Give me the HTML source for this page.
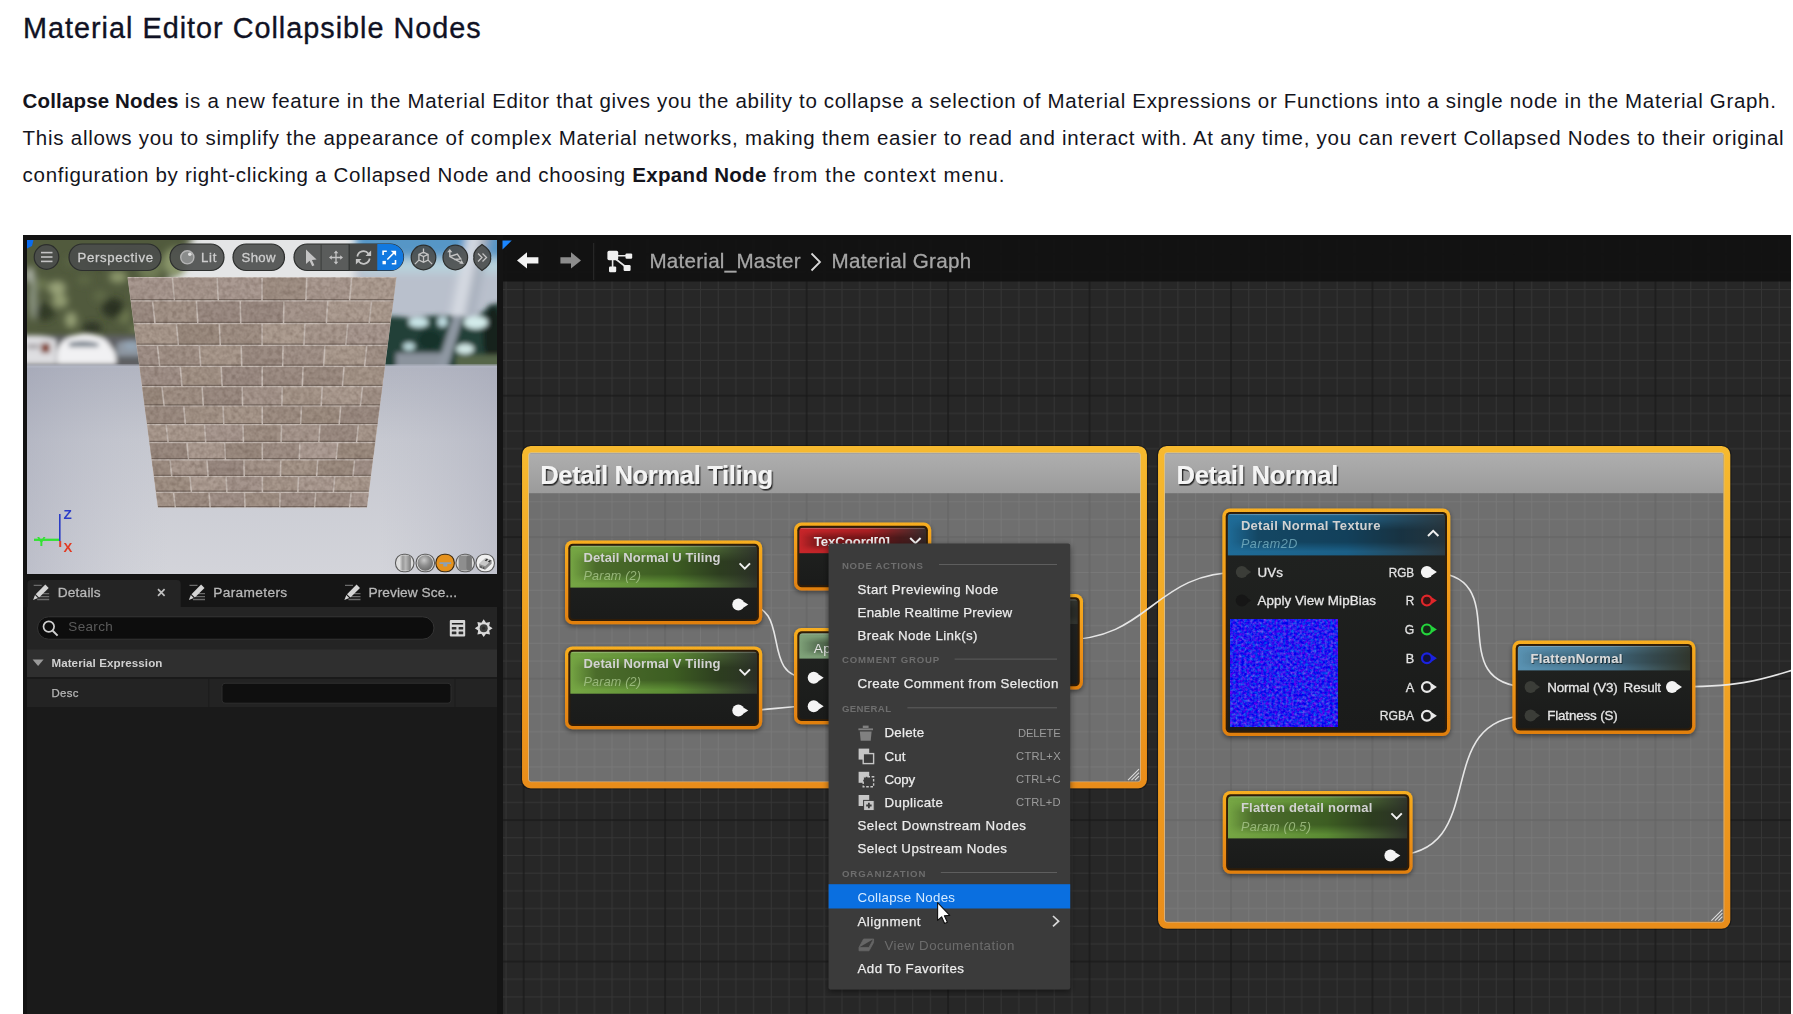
<!DOCTYPE html>
<html lang="en"><head><meta charset="utf-8"><title>Material Editor Collapsible Nodes</title>
<style>
html,body{margin:0;padding:0;background:#fff;}
body{width:1793px;height:1014px;overflow:hidden;position:relative;font-family:"Liberation Sans",sans-serif;}
.ttl{position:absolute;left:23px;top:10.8px;margin:0;font-weight:400;font-size:28.8px;line-height:34px;letter-spacing:1px;color:#101224;-webkit-text-stroke:.35px #101224;white-space:nowrap;}
.para{position:absolute;left:22.6px;top:82.2px;margin:0;font-size:20.5px;line-height:37.1px;color:#14141c;white-space:nowrap;}
.para b{font-weight:700;}
#shot{position:absolute;left:23px;top:235px;width:1768px;height:779px;display:block;}
#shotwrap{position:absolute;left:23px;top:235px;width:1768px;height:779px;overflow:hidden;background:#131313;}
#shotwrap #shot{left:0;top:0;filter:blur(.45px);}
</style></head>
<body>

<h1 class="ttl">Material Editor Collapsible Nodes</h1>
<p class="para"><span style="letter-spacing:.15px"><b>Collapse Nodes</b></span><span style="letter-spacing:.68px"> is a new feature in the Material Editor that gives you the ability to collapse a selection of Material Expressions or Functions into a single node in the Material Graph.</span><br><span style="letter-spacing:.748px">This allows you to simplify the appearance of complex Material networks, making them easier to read and interact with. At any time, you can revert Collapsed Nodes to their original</span><br><span style="letter-spacing:.70px">configuration by right-clicking a Collapsed Node and choosing </span><span style="letter-spacing:.3px"><b>Expand Node</b></span><span style="letter-spacing:1.02px"> from the context menu.</span></p>
<div id="shotwrap"><svg id="shot" viewBox="23 235 1768 779" width="1768" height="779" font-family="'Liberation Sans', sans-serif">
<defs>

<clipPath id="vpclip"><rect x="27" y="240" width="470" height="334"/></clipPath>
<filter id="blur6" x="-20%" y="-20%" width="140%" height="140%"><feGaussianBlur stdDeviation="4"/></filter>
<filter id="blur3" x="-20%" y="-20%" width="140%" height="140%"><feGaussianBlur stdDeviation="2.5"/></filter>
<filter id="blur4" x="-20%" y="-20%" width="140%" height="140%"><feGaussianBlur stdDeviation="3.6"/></filter>
<filter id="blur1" x="-20%" y="-20%" width="140%" height="140%"><feGaussianBlur stdDeviation="1.2"/></filter>
<linearGradient id="floorg" x1="0" y1="0" x2="0" y2="1"><stop offset="0" stop-color="#b2b5c1"/><stop offset=".35" stop-color="#c6c8d0"/><stop offset="1" stop-color="#d3d4da"/></linearGradient>
<linearGradient id="floorh" x1="0" y1="0" x2="1" y2="0"><stop offset="0" stop-color="#8f93a8" stop-opacity=".32"/><stop offset=".3" stop-color="#b0b3c2" stop-opacity="0"/><stop offset=".75" stop-color="#b0b3c2" stop-opacity="0"/><stop offset="1" stop-color="#9da0b2" stop-opacity=".35"/></linearGradient>
<linearGradient id="skyr" x1="0" y1="0" x2="0" y2="1"><stop offset="0" stop-color="#4f93c6"/><stop offset="1" stop-color="#a9c6d8"/></linearGradient>
<filter id="bricknoise" x="0" y="0" width="100%" height="100%" color-interpolation-filters="sRGB"><feTurbulence type="fractalNoise" baseFrequency="0.22" numOctaves="2" seed="7" result="n"/><feColorMatrix in="n" type="matrix" values="0 0 0 0 0.25  0 0 0 0 0.18  0 0 0 0 0.14  0.34 0.34 0 0 -0.27" result="a"/><feComposite in="a" in2="SourceAlpha" operator="in" result="dark"/><feMerge><feMergeNode in="SourceGraphic"/><feMergeNode in="dark"/></feMerge></filter>
<pattern id="grid" x="523.7" y="395.7" width="141.464" height="141.464" patternUnits="userSpaceOnUse">
<rect width="141.464" height="141.464" fill="#272727"/>
<rect x="17.18" y="0" width="1" height="141.46" fill="#353535"/>
<rect x="0" y="17.18" width="141.46" height="1" fill="#353535"/>
<rect x="34.87" y="0" width="1" height="141.46" fill="#353535"/>
<rect x="0" y="34.87" width="141.46" height="1" fill="#353535"/>
<rect x="52.55" y="0" width="1" height="141.46" fill="#353535"/>
<rect x="0" y="52.55" width="141.46" height="1" fill="#353535"/>
<rect x="70.23" y="0" width="1" height="141.46" fill="#353535"/>
<rect x="0" y="70.23" width="141.46" height="1" fill="#353535"/>
<rect x="87.91" y="0" width="1" height="141.46" fill="#353535"/>
<rect x="0" y="87.91" width="141.46" height="1" fill="#353535"/>
<rect x="105.60" y="0" width="1" height="141.46" fill="#353535"/>
<rect x="0" y="105.60" width="141.46" height="1" fill="#353535"/>
<rect x="123.28" y="0" width="1" height="141.46" fill="#353535"/>
<rect x="0" y="123.28" width="141.46" height="1" fill="#353535"/>
<rect x="-0.6" y="0" width="1.2" height="141.46" fill="#171717"/><rect x="140.86" y="0" width="1.2" height="141.46" fill="#171717"/>
<rect x="0" y="-0.6" width="141.46" height="1.2" fill="#171717"/><rect x="0" y="140.86" width="141.46" height="1.2" fill="#171717"/>
</pattern>
<linearGradient id="cborder" x1="0" y1="0" x2="0" y2="1"><stop offset="0" stop-color="#f6b92f"/><stop offset=".5" stop-color="#f0a222"/><stop offset="1" stop-color="#e98d1a"/></linearGradient>
<linearGradient id="ctitle" x1="0" y1="0" x2="0" y2="1"><stop offset="0" stop-color="#aeaeae"/><stop offset="1" stop-color="#9b9b9b"/></linearGradient>
<filter id="tshadow" x="-5%" y="-20%" width="110%" height="150%"><feDropShadow dx="1.3" dy="1.6" stdDeviation="0.5" flood-color="#000" flood-opacity=".75"/></filter>
<filter id="tshadow2" x="-5%" y="-20%" width="110%" height="150%"><feDropShadow dx=".8" dy="1" stdDeviation="0.4" flood-color="#000" flood-opacity=".6"/></filter>
<filter id="nshadow" x="-10%" y="-10%" width="120%" height="130%"><feDropShadow dx="0" dy="2" stdDeviation="2.5" flood-color="#000" flood-opacity=".45"/></filter>
<linearGradient id="nborder" x1="0" y1="0" x2="0" y2="1"><stop offset="0" stop-color="#f7ae20"/><stop offset=".5" stop-color="#ee9418"/><stop offset="1" stop-color="#e07f10"/></linearGradient>
<linearGradient id="hgreen" x1="0" y1="0" x2="1" y2="0"><stop offset="0" stop-color="#76a644"/><stop offset=".55" stop-color="#5a8a33"/><stop offset="1" stop-color="#30352c"/></linearGradient>
<linearGradient id="hblue" x1="0" y1="0" x2="1" y2="0"><stop offset="0" stop-color="#1f6c98"/><stop offset=".55" stop-color="#1b5f86"/><stop offset="1" stop-color="#2b3b44"/></linearGradient>
<linearGradient id="hred" x1="0" y1="0" x2="1" y2="0"><stop offset="0" stop-color="#c8262a"/><stop offset=".55" stop-color="#aa1f23"/><stop offset="1" stop-color="#3a2c2c"/></linearGradient>
<linearGradient id="hfunc" x1="0" y1="0" x2="1" y2="0"><stop offset="0" stop-color="#5a93b3"/><stop offset=".55" stop-color="#48748c"/><stop offset="1" stop-color="#34392f"/></linearGradient>
<linearGradient id="hgg" x1="0" y1="0" x2="1" y2="0"><stop offset="0" stop-color="#7fa279"/><stop offset=".55" stop-color="#6d8c6a"/><stop offset="1" stop-color="#3a3f3a"/></linearGradient>
<linearGradient id="hdk" x1="0" y1="0" x2="1" y2="0"><stop offset="0" stop-color="#5a6a58"/><stop offset=".55" stop-color="#4a5648"/><stop offset="1" stop-color="#30322e"/></linearGradient>
<linearGradient id="gloss" x1="0" y1="0" x2="0" y2="1"><stop offset="0" stop-color="#fff" stop-opacity=".10"/><stop offset=".12" stop-color="#000" stop-opacity="0"/><stop offset=".38" stop-color="#000" stop-opacity=".32"/><stop offset=".68" stop-color="#000" stop-opacity=".32"/><stop offset=".9" stop-color="#000" stop-opacity="0"/></linearGradient>
<linearGradient id="glossm" x1="0" y1="0" x2="1" y2="0"><stop offset="0" stop-color="#fff" stop-opacity="0"/><stop offset=".14" stop-color="#fff" stop-opacity="1"/><stop offset=".8" stop-color="#fff" stop-opacity="1"/><stop offset="1" stop-color="#fff" stop-opacity=".4"/></linearGradient>
<mask id="glossmask" maskContentUnits="objectBoundingBox"><rect width="1" height="1" fill="url(#glossm)"/></mask>
<linearGradient id="bodyg" x1="0" y1="0" x2="0" y2="1"><stop offset="0" stop-color="#212321"/><stop offset="1" stop-color="#1a1b1a"/></linearGradient>
</defs>
<rect x="23" y="235" width="1768" height="779" fill="#131313"/>
<rect x="503" y="239" width="1288" height="775" fill="url(#grid)" />
<rect x="503" y="235" width="1288" height="46.5" fill="#111111" opacity=".93"/>
<rect x="497" y="235" width="6" height="779" fill="#141414" />
<polygon points="502.5,240.5 511.8,240.5 502.5,249.5" fill="#1b86ff"/>
<path d="M517 260.4l10 -8.2v5h11.4v6.4h-11.4v5z" fill="#f2f2f2"/>
<path d="M581 260.4l-10 -8.2v5h-10.6v6.4h10.6v5z" fill="#8c8c8c"/>
<rect x="593.2" y="243" width="1" height="37" fill="#2c2c2c" />
<g stroke="#e6e6e6" stroke-width="1.6" fill="none"><path d="M612.6 258V268M616 255.8H627M615 258.5L626 267"/></g>
<rect x="607.4" y="250.8" width="10.8" height="9.4" rx="1.6" fill="#f0f0f0" />
<rect x="625.5" y="253.4" width="6.7" height="5.4" rx="1.2" fill="#f0f0f0" />
<rect x="609" y="266.4" width="7.2" height="5.8" rx="1.2" fill="#f0f0f0" />
<rect x="623.6" y="265" width="7" height="6" rx="1.2" fill="#f0f0f0" />
<text x="649.4" y="268" font-size="20.6" fill="#a6a6a6" textLength="151.2" lengthAdjust="spacing" stroke="#a6a6a6" stroke-width="0.3">Material_Master</text>
<path d="M811.5 253.5L820 262L811.5 270.5" stroke="#d8d8d8" stroke-width="1.8" fill="none"/>
<text x="831.6" y="267.6" font-size="20.6" fill="#a6a6a6" textLength="139.5" lengthAdjust="spacing" stroke="#a6a6a6" stroke-width="0.3">Material Graph</text>
<rect x="529" y="453.2" width="611" height="328" fill="#ffffff" opacity=".335"/>
<rect x="529" y="453.2" width="611" height="40" fill="url(#ctitle)" />
<rect x="525.5" y="449.5" width="618" height="335.4" rx="5.2" fill="none" stroke="url(#cborder)" stroke-width="7.0"/>
<rect x="521.5" y="445.5" width="626" height="343.4" rx="9" fill="none" stroke="#000" stroke-width="1.2" opacity=".335"/>
<rect x="528.5" y="452.7" width="612" height="329" rx="2.5" fill="none" stroke="#c9c9c9" stroke-width="1" opacity=".55"/>
<text x="540.2" y="483.8" font-size="25.6" fill="#f4f4f4" font-weight="700" textLength="233" lengthAdjust="spacing" filter="url(#tshadow)">Detail Normal Tiling</text>
<g stroke="#e8e8e8" stroke-width="1.1" opacity=".9"><path d="M1128.0 780.1999999999999L1139.0 769.1999999999999M1131.5 780.1999999999999L1139.0 772.6999999999999M1135.0 780.1999999999999L1139.0 776.1999999999999"/></g>
<rect x="1165" y="453.2" width="558.4" height="468.4" fill="#ffffff" opacity=".335"/>
<rect x="1165" y="453.2" width="558.4" height="40" fill="url(#ctitle)" />
<rect x="1161.5" y="449.5" width="565.4" height="475.8" rx="5.2" fill="none" stroke="url(#cborder)" stroke-width="7.0"/>
<rect x="1157.5" y="445.5" width="573.4" height="483.8" rx="9" fill="none" stroke="#000" stroke-width="1.2" opacity=".335"/>
<rect x="1164.5" y="452.7" width="559.4" height="469.4" rx="2.5" fill="none" stroke="#c9c9c9" stroke-width="1" opacity=".55"/>
<text x="1176.4" y="483.8" font-size="25.6" fill="#f4f4f4" font-weight="700" textLength="162" lengthAdjust="spacing" filter="url(#tshadow)">Detail Normal</text>
<g stroke="#e8e8e8" stroke-width="1.1" opacity=".9"><path d="M1711.4 920.5999999999999L1722.4 909.5999999999999M1714.9 920.5999999999999L1722.4 913.0999999999999M1718.4 920.5999999999999L1722.4 916.5999999999999"/></g>
<path d="M744 604.6C794 604.6 758 677.8 808 677.8" stroke="#e6e6e6" stroke-width="1.6" fill="none" stroke-linecap="round"/>
<path d="M744 710.6C768 710.6 784 706.2 808 706.2" stroke="#e6e6e6" stroke-width="1.6" fill="none" stroke-linecap="round"/>
<path d="M1062 640C1152 640 1151.8 572 1241.8 572" stroke="#e6e6e6" stroke-width="1.6" fill="none" stroke-linecap="round"/>
<path d="M1426.9 572C1521.9 572 1435.6 687 1530.6 687" stroke="#e6e6e6" stroke-width="1.6" fill="none" stroke-linecap="round"/>
<path d="M1390.4 855.6C1495.4 855.6 1425.6 715.4 1530.6 715.4" stroke="#e6e6e6" stroke-width="1.6" fill="none" stroke-linecap="round"/>
<path d="M1672 687C1740 687 1760 680 1793 670" stroke="#e6e6e6" stroke-width="1.6" fill="none" stroke-linecap="round"/>
<rect x="794" y="522.5" width="137.2" height="68" rx="7.5" fill="url(#nborder)" filter="url(#nshadow)"/>
<rect x="797.3" y="525.8" width="130.6" height="61.4" rx="4.5" fill="#2f1c08"/>
<clipPath id="nc1"><rect x="799.2" y="527.7" width="126.8" height="57.6" rx="3.6"/></clipPath>
<g clip-path="url(#nc1)">
<rect x="799.2" y="527.7" width="126.8" height="57.6" fill="url(#bodyg)" />
<rect x="799.2" y="527.7" width="126.8" height="25.5" fill="url(#hred)" />
<rect x="799.2" y="527.7" width="126.8" height="25.5" fill="url(#gloss)" mask="url(#glossmask)"/>
<rect x="799.2" y="527.7" width="126.8" height="1.2" fill="#ffffff" opacity=".22"/>
</g>
<text x="813.8" y="546.3" font-size="13.2" fill="#ececec" font-weight="700" textLength="76" lengthAdjust="spacing">TexCoord[0]</text>
<path d="M910.1999999999999 538.0L915.4 543.2L920.6 538.0" stroke="#f0f0f0" stroke-width="2" fill="none" stroke-linejoin="miter"/>
<rect x="794" y="628" width="166" height="96.3" rx="7.5" fill="url(#nborder)" filter="url(#nshadow)"/>
<rect x="797.3" y="631.3" width="159.4" height="89.7" rx="4.5" fill="#2f1c08"/>
<clipPath id="nc2"><rect x="799.2" y="633.2" width="155.6" height="85.9" rx="3.6"/></clipPath>
<g clip-path="url(#nc2)">
<rect x="799.2" y="633.2" width="155.6" height="85.9" fill="url(#bodyg)" />
<rect x="799.2" y="633.2" width="155.6" height="25.4" fill="url(#hgg)" />
<rect x="799.2" y="633.2" width="155.6" height="25.4" fill="url(#gloss)" mask="url(#glossmask)"/>
<rect x="799.2" y="633.2" width="155.6" height="1.2" fill="#ffffff" opacity=".22"/>
</g>
<text x="813.7" y="653" font-size="13.6" fill="#e4e4e4" textLength="17" lengthAdjust="spacing">Ap</text>
<path d="M818.7 674.5999999999999L823.7 677.8L818.7 681.0Z" fill="#f4f4f4"/>
<circle cx="813.7" cy="677.8" r="6" fill="#f4f4f4"/>
<path d="M818.7 703.0L823.7 706.2L818.7 709.4000000000001Z" fill="#f4f4f4"/>
<circle cx="813.7" cy="706.2" r="6" fill="#f4f4f4"/>
<rect x="960" y="594" width="123" height="95.6" rx="7.5" fill="url(#nborder)" filter="url(#nshadow)"/>
<rect x="963.3" y="597.3" width="116.4" height="89" rx="4.5" fill="#2f1c08"/>
<clipPath id="nc3"><rect x="965.2" y="599.2" width="112.6" height="85.2" rx="3.6"/></clipPath>
<g clip-path="url(#nc3)">
<rect x="965.2" y="599.2" width="112.6" height="85.2" fill="url(#bodyg)" />
<rect x="965.2" y="599.2" width="112.6" height="24.8" fill="url(#hdk)" />
<rect x="965.2" y="599.2" width="112.6" height="24.8" fill="url(#gloss)" mask="url(#glossmask)"/>
<rect x="965.2" y="599.2" width="112.6" height="1.2" fill="#ffffff" opacity=".22"/>
</g>
<rect x="565" y="540.4" width="197.2" height="83.9" rx="7.5" fill="url(#nborder)" filter="url(#nshadow)"/>
<rect x="568.3" y="543.7" width="190.6" height="77.3" rx="4.5" fill="#2f1c08"/>
<clipPath id="nc4"><rect x="570.2" y="545.6" width="186.8" height="73.5" rx="3.6"/></clipPath>
<g clip-path="url(#nc4)">
<rect x="570.2" y="545.6" width="186.8" height="73.5" fill="url(#bodyg)" />
<rect x="570.2" y="545.6" width="186.8" height="42" fill="url(#hgreen)" />
<rect x="570.2" y="545.6" width="186.8" height="42" fill="url(#gloss)" mask="url(#glossmask)"/>
<rect x="570.2" y="545.6" width="186.8" height="1.2" fill="#ffffff" opacity=".22"/>
</g>
<text x="583.5" y="562" font-size="13" fill="#d2d2d2" font-weight="700" textLength="137" lengthAdjust="spacing">Detail Normal U Tiling</text>
<text x="583.5" y="580.3" font-size="12.6" fill="#a9c78c" font-style="italic" textLength="57.5" lengthAdjust="spacing" opacity="0.8">Param (2)</text>
<path d="M739.5999999999999 563.4L744.8 568.6L750.0 563.4" stroke="#f0f0f0" stroke-width="2" fill="none" stroke-linejoin="miter"/>
<path d="M743.3 601.4L748.3 604.6L743.3 607.8000000000001Z" fill="#f4f4f4"/>
<circle cx="738.3" cy="604.6" r="6" fill="#f4f4f4"/>
<rect x="565" y="646.4" width="197.2" height="82.9" rx="7.5" fill="url(#nborder)" filter="url(#nshadow)"/>
<rect x="568.3" y="649.7" width="190.6" height="76.3" rx="4.5" fill="#2f1c08"/>
<clipPath id="nc5"><rect x="570.2" y="651.6" width="186.8" height="72.5" rx="3.6"/></clipPath>
<g clip-path="url(#nc5)">
<rect x="570.2" y="651.6" width="186.8" height="72.5" fill="url(#bodyg)" />
<rect x="570.2" y="651.6" width="186.8" height="42.1" fill="url(#hgreen)" />
<rect x="570.2" y="651.6" width="186.8" height="42.1" fill="url(#gloss)" mask="url(#glossmask)"/>
<rect x="570.2" y="651.6" width="186.8" height="1.2" fill="#ffffff" opacity=".22"/>
</g>
<text x="583.5" y="667.8" font-size="13" fill="#d2d2d2" font-weight="700" textLength="137" lengthAdjust="spacing">Detail Normal V Tiling</text>
<text x="583.5" y="685.6" font-size="12.6" fill="#a9c78c" font-style="italic" textLength="57.5" lengthAdjust="spacing" opacity="0.8">Param (2)</text>
<path d="M739.5999999999999 669.4L744.8 674.6L750.0 669.4" stroke="#f0f0f0" stroke-width="2" fill="none" stroke-linejoin="miter"/>
<path d="M743.3 707.4L748.3 710.6L743.3 713.8000000000001Z" fill="#f4f4f4"/>
<circle cx="738.3" cy="710.6" r="6" fill="#f4f4f4"/>
<rect x="1222.4" y="508.6" width="227.9" height="227.4" rx="7.5" fill="url(#nborder)" filter="url(#nshadow)"/>
<rect x="1225.7" y="511.9" width="221.3" height="220.8" rx="4.5" fill="#2f1c08"/>
<clipPath id="nc6"><rect x="1227.6" y="513.8" width="217.5" height="217" rx="3.6"/></clipPath>
<g clip-path="url(#nc6)">
<rect x="1227.6" y="513.8" width="217.5" height="217" fill="url(#bodyg)" />
<rect x="1227.6" y="513.8" width="217.5" height="41.6" fill="url(#hblue)" />
<rect x="1227.6" y="513.8" width="217.5" height="41.6" fill="url(#gloss)" mask="url(#glossmask)"/>
<rect x="1227.6" y="513.8" width="217.5" height="1.2" fill="#ffffff" opacity=".22"/>
</g>
<text x="1240.9" y="530.1" font-size="13" fill="#d2d2d2" font-weight="700" textLength="139.5" lengthAdjust="spacing">Detail Normal Texture</text>
<text x="1240.9" y="548.3" font-size="12.6" fill="#7fb8c8" font-style="italic" textLength="56.5" lengthAdjust="spacing" opacity="0.75">Param2D</text>
<path d="M1428.0 536.0L1433.2 530.8L1438.4 536.0" stroke="#f0f0f0" stroke-width="2" fill="none" stroke-linejoin="miter"/>
<path d="M1246.8 569L1251.2 572L1246.8 575Z" fill="#3b3d38"/>
<circle cx="1241.8" cy="572" r="6" fill="#3b3d38"/>
<text x="1257.4" y="576.6" font-size="13.4" fill="#e6e6e6" textLength="25.5" lengthAdjust="spacing" stroke="#e6e6e6" stroke-width="0.3">UVs</text>
<path d="M1246.8 597.6L1251.2 600.6L1246.8 603.6Z" fill="#161616"/>
<circle cx="1241.8" cy="600.6" r="6" fill="#161616"/>
<text x="1257.4" y="605.2" font-size="13.4" fill="#e6e6e6" textLength="118.5" lengthAdjust="spacing" stroke="#e6e6e6" stroke-width="0.3">Apply View MipBias</text>
<text x="1388.7" y="576.5" font-size="12.8" fill="#e2e2e2" textLength="25.5" lengthAdjust="spacingAndGlyphs" stroke="#e2e2e2" stroke-width="0.3">RGB</text>
<text x="1405.7" y="605.1" font-size="12.8" fill="#e2e2e2" textLength="8.5" lengthAdjust="spacingAndGlyphs" stroke="#e2e2e2" stroke-width="0.3">R</text>
<text x="1404.7" y="633.9" font-size="12.8" fill="#e2e2e2" textLength="9.5" lengthAdjust="spacingAndGlyphs" stroke="#e2e2e2" stroke-width="0.3">G</text>
<text x="1405.7" y="662.7" font-size="12.8" fill="#e2e2e2" textLength="8.5" lengthAdjust="spacingAndGlyphs" stroke="#e2e2e2" stroke-width="0.3">B</text>
<text x="1405.7" y="691.5" font-size="12.8" fill="#e2e2e2" textLength="8.5" lengthAdjust="spacingAndGlyphs" stroke="#e2e2e2" stroke-width="0.3">A</text>
<text x="1379.7" y="720.3" font-size="12.8" fill="#e2e2e2" textLength="34.5" lengthAdjust="spacingAndGlyphs" stroke="#e2e2e2" stroke-width="0.3">RGBA</text>
<path d="M1431.9 568.8L1436.9 572L1431.9 575.2Z" fill="#f4f4f4"/>
<circle cx="1426.9" cy="572" r="6" fill="#f4f4f4"/>
<path d="M1431.9 597.4L1436.9 600.6L1431.9 603.8000000000001Z" fill="#e0262a"/>
<circle cx="1426.9" cy="600.6" r="4.9" fill="#3a1414" stroke="#e0262a" stroke-width="2.2"/>
<path d="M1431.9 626.1999999999999L1436.9 629.4L1431.9 632.6Z" fill="#24d43c"/>
<circle cx="1426.9" cy="629.4" r="4.9" fill="#142a16" stroke="#24d43c" stroke-width="2.2"/>
<path d="M1431.9 655.0L1436.9 658.2L1431.9 661.4000000000001Z" fill="#1a22e0"/>
<circle cx="1426.9" cy="658.2" r="4.9" fill="#12123a" stroke="#1a22e0" stroke-width="2.2"/>
<path d="M1431.9 683.8L1436.9 687L1431.9 690.2Z" fill="#e8e8e8"/>
<circle cx="1426.9" cy="687" r="4.9" fill="#1c1c1c" stroke="#e8e8e8" stroke-width="2.2"/>
<path d="M1431.9 712.5999999999999L1436.9 715.8L1431.9 719.0Z" fill="#e8e8e8"/>
<circle cx="1426.9" cy="715.8" r="4.9" fill="#1c1c1c" stroke="#e8e8e8" stroke-width="2.2"/>
<filter id="nmap" x="0" y="0" width="100%" height="100%" color-interpolation-filters="sRGB"><feTurbulence type="fractalNoise" baseFrequency="0.36" numOctaves="2" seed="3" result="n"/><feColorMatrix in="n" type="matrix" values="0.9 0 0 0 -0.3  0 0.8 0 0 -0.28  0 0 0 0 0.93  0 0 0 0 1"/></filter>
<rect x="1230.4" y="619.2" width="107.6" height="107.6" fill="#2a2aee" filter="url(#nmap)"/>
<rect x="1512.4" y="640.6" width="183" height="93.3" rx="7.5" fill="url(#nborder)" filter="url(#nshadow)"/>
<rect x="1515.7" y="643.9" width="176.4" height="86.7" rx="4.5" fill="#2f1c08"/>
<clipPath id="nc7"><rect x="1517.6" y="645.8" width="172.6" height="82.9" rx="3.6"/></clipPath>
<g clip-path="url(#nc7)">
<rect x="1517.6" y="645.8" width="172.6" height="82.9" fill="url(#bodyg)" />
<rect x="1517.6" y="645.8" width="172.6" height="24.6" fill="url(#hfunc)" />
<rect x="1517.6" y="645.8" width="172.6" height="24.6" fill="url(#gloss)" mask="url(#glossmask)" opacity=".45"/>
<rect x="1517.6" y="645.8" width="172.6" height="1.2" fill="#ffffff" opacity=".22"/>
</g>
<text x="1530.4" y="663.2" font-size="13" fill="#dadada" font-weight="700" textLength="92" lengthAdjust="spacing" filter="url(#tshadow2)">FlattenNormal</text>
<path d="M1535.6 684L1540.0 687L1535.6 690Z" fill="#3b3d38"/>
<circle cx="1530.6" cy="687" r="6" fill="#3b3d38"/>
<path d="M1535.6 712.4L1540.0 715.4L1535.6 718.4Z" fill="#3b3d38"/>
<circle cx="1530.6" cy="715.4" r="6" fill="#3b3d38"/>
<text x="1547.2" y="691.6" font-size="13.4" fill="#e6e6e6" textLength="70.5" lengthAdjust="spacing" stroke="#e6e6e6" stroke-width="0.3">Normal (V3)</text>
<text x="1623.6" y="691.6" font-size="13.4" fill="#e6e6e6" textLength="37.5" lengthAdjust="spacing" stroke="#e6e6e6" stroke-width="0.3">Result</text>
<text x="1547.2" y="720" font-size="13.4" fill="#e6e6e6" textLength="70.5" lengthAdjust="spacing" stroke="#e6e6e6" stroke-width="0.3">Flatness (S)</text>
<path d="M1677 683.8L1682 687L1677 690.2Z" fill="#f4f4f4"/>
<circle cx="1672" cy="687" r="6" fill="#f4f4f4"/>
<rect x="1222.8" y="791" width="189.8" height="82.8" rx="7.5" fill="url(#nborder)" filter="url(#nshadow)"/>
<rect x="1226.1" y="794.3" width="183.2" height="76.2" rx="4.5" fill="#2f1c08"/>
<clipPath id="nc8"><rect x="1228" y="796.2" width="179.4" height="72.4" rx="3.6"/></clipPath>
<g clip-path="url(#nc8)">
<rect x="1228" y="796.2" width="179.4" height="72.4" fill="url(#bodyg)" />
<rect x="1228" y="796.2" width="179.4" height="42.2" fill="url(#hgreen)" />
<rect x="1228" y="796.2" width="179.4" height="42.2" fill="url(#gloss)" mask="url(#glossmask)"/>
<rect x="1228" y="796.2" width="179.4" height="1.2" fill="#ffffff" opacity=".22"/>
</g>
<text x="1240.9" y="811.8" font-size="13" fill="#d2d2d2" font-weight="700" textLength="131.5" lengthAdjust="spacing">Flatten detail normal</text>
<text x="1240.9" y="831" font-size="12.6" fill="#a9c78c" font-style="italic" textLength="70" lengthAdjust="spacing" opacity="0.8">Param (0.5)</text>
<path d="M1391.3999999999999 813.4L1396.6 818.6L1401.8 813.4" stroke="#f0f0f0" stroke-width="2" fill="none" stroke-linejoin="miter"/>
<path d="M1395.4 852.4L1400.4 855.6L1395.4 858.8000000000001Z" fill="#f4f4f4"/>
<circle cx="1390.4" cy="855.6" r="6" fill="#f4f4f4"/>
<filter id="mshadow" x="-10%" y="-5%" width="120%" height="112%"><feDropShadow dx="0" dy="2" stdDeviation="3" flood-color="#000" flood-opacity=".5"/></filter>
<rect x="828.6" y="543.6" width="241.6" height="446" rx="2" fill="#3a3a3a" filter="url(#mshadow)"/>
<text x="842" y="568.6" font-size="9.6" fill="#6e6e6e" font-weight="700" textLength="80.8" lengthAdjust="spacing">NODE ACTIONS</text>
<rect x="939" y="564" width="118" height="1" fill="#5e5e5e" />
<text x="857.5" y="593.5" font-size="13.3" fill="#ececec" textLength="140.6" lengthAdjust="spacing" stroke="#ececec" stroke-width="0.25">Start Previewing Node</text>
<text x="857.5" y="617.1" font-size="13.3" fill="#ececec" textLength="154.7" lengthAdjust="spacing" stroke="#ececec" stroke-width="0.25">Enable Realtime Preview</text>
<text x="857.5" y="640.1" font-size="13.3" fill="#ececec" textLength="120" lengthAdjust="spacing" stroke="#ececec" stroke-width="0.25">Break Node Link(s)</text>
<text x="842" y="663.2" font-size="9.6" fill="#6e6e6e" font-weight="700" textLength="97.2" lengthAdjust="spacing">COMMENT GROUP</text>
<rect x="954.6" y="658.6" width="102.4" height="1" fill="#5e5e5e" />
<text x="857.5" y="688.4" font-size="13.3" fill="#ececec" textLength="200.8" lengthAdjust="spacing" stroke="#ececec" stroke-width="0.25">Create Comment from Selection</text>
<text x="842" y="711.9" font-size="9.6" fill="#6e6e6e" font-weight="700" textLength="49" lengthAdjust="spacing">GENERAL</text>
<rect x="907.4" y="707.3" width="149.6" height="1" fill="#5e5e5e" />
<text x="884.4" y="737.4" font-size="13.3" fill="#ececec" textLength="39.8" lengthAdjust="spacing" stroke="#ececec" stroke-width="0.25">Delete</text>
<text x="884.4" y="760.5" font-size="13.3" fill="#ececec" textLength="21" lengthAdjust="spacing" stroke="#ececec" stroke-width="0.25">Cut</text>
<text x="884.4" y="783.7" font-size="13.3" fill="#ececec" textLength="30.7" lengthAdjust="spacing" stroke="#ececec" stroke-width="0.25">Copy</text>
<text x="884.4" y="806.9" font-size="13.3" fill="#ececec" textLength="58.6" lengthAdjust="spacing" stroke="#ececec" stroke-width="0.25">Duplicate</text>
<text x="857.5" y="829.7" font-size="13.3" fill="#ececec" textLength="168.5" lengthAdjust="spacing" stroke="#ececec" stroke-width="0.25">Select Downstream Nodes</text>
<text x="857.5" y="853.1" font-size="13.3" fill="#ececec" textLength="149.5" lengthAdjust="spacing" stroke="#ececec" stroke-width="0.25">Select Upstream Nodes</text>
<text x="1060.6" y="736.8" font-size="11.2" fill="#9c9c9c" text-anchor="end" textLength="42.5" lengthAdjust="spacing">DELETE</text>
<text x="1060.6" y="759.9" font-size="11.2" fill="#9c9c9c" text-anchor="end" textLength="44.5" lengthAdjust="spacing">CTRL+X</text>
<text x="1060.6" y="783.1" font-size="11.2" fill="#9c9c9c" text-anchor="end" textLength="44.5" lengthAdjust="spacing">CTRL+C</text>
<text x="1060.6" y="806.3" font-size="11.2" fill="#9c9c9c" text-anchor="end" textLength="44.5" lengthAdjust="spacing">CTRL+D</text>
<g fill="#808080"><rect x="858.4" y="728.4" width="14.6" height="1.8"/><rect x="862.8" y="725.6" width="5.8" height="2.4"/><path d="M859.8 731.4h11.8l-.9 9.4h-10z"/></g>
<rect x="858.6" y="748.6" width="10.6" height="11" fill="#c6c6c6"/><rect x="863.2" y="753.6" width="10.4" height="10" fill="#3a3a3a" stroke="#c6c6c6" stroke-width="1.4"/>
<rect x="858.6" y="771.8" width="10.6" height="11" fill="#c6c6c6"/><rect x="863.2" y="776.8" width="10.4" height="10" fill="#3a3a3a" stroke="#c6c6c6" stroke-width="1.4" stroke-dasharray="2.6 1.6"/>
<rect x="858.6" y="795" width="10.6" height="11" fill="#c6c6c6"/><rect x="863.6" y="800.4" width="10.6" height="10.2" fill="#c6c6c6" stroke="#3a3a3a" stroke-width="1"/><path d="M866.2 805.5h5.4M868.9 802.8v5.4" stroke="#3a3a3a" stroke-width="1.8"/>
<text x="842" y="876.6" font-size="9.6" fill="#6e6e6e" font-weight="700" textLength="83.4" lengthAdjust="spacing">ORGANIZATION</text>
<rect x="940.8" y="872" width="116.2" height="1" fill="#5e5e5e" />
<rect x="828.6" y="884.2" width="241.6" height="24.3" fill="#0a6fe0" />
<text x="857.5" y="901.6" font-size="13.3" fill="#d6ebff" textLength="97.5" lengthAdjust="spacing">Collapse Nodes</text>
<text x="857.5" y="926.3" font-size="13.3" fill="#ececec" textLength="63" lengthAdjust="spacing" stroke="#ececec" stroke-width="0.25">Alignment</text>
<path d="M1053 916L1058.6 921.2L1053 926.4" stroke="#d8d8d8" stroke-width="1.7" fill="none"/>
<path d="M859 947.4l4.6 -8.4h10l-4.6 8.4zM859 947.4v3.4h10l4.6 -8.4v-3.4" fill="#666" stroke="#666" stroke-width=".8"/>
<text x="884.4" y="949.5" font-size="13.3" fill="#6c6c6c" textLength="130" lengthAdjust="spacing">View Documentation</text>
<text x="857.5" y="972.5" font-size="13.3" fill="#ececec" textLength="106.5" lengthAdjust="spacing" stroke="#ececec" stroke-width="0.25">Add To Favorites</text>
<path d="M937.6 902.6V920.4L941.6 916.8L944.6 923.4L947.4 922.2L944.4 915.8L949.8 915.4Z" fill="#fff" stroke="#111" stroke-width="1.1" stroke-linejoin="round"/>
<g clip-path="url(#vpclip)">
<rect x="27" y="240" width="470" height="130" fill="#e4e5e6" />
<g filter="url(#blur6)">
<path d="M-40 180H205 Q196 262 150 300 L150 420 H-40Z" fill="#515a3d"/>
</g>
<g filter="url(#blur4)">
<ellipse cx="57" cy="288" rx="9" ry="7" fill="#98a278"/>
<ellipse cx="60" cy="301" rx="8" ry="7" fill="#939d72"/>
<ellipse cx="71" cy="320" rx="6" ry="8" fill="#96a076"/>
<ellipse cx="118" cy="277" rx="9" ry="6" fill="#8c976c"/>
<ellipse cx="124" cy="316" rx="6" ry="8" fill="#6d7850"/>
<ellipse cx="40" cy="284" rx="8" ry="6" fill="#6b7650"/>
<ellipse cx="84" cy="280" rx="7" ry="5" fill="#5d6845"/>
<ellipse cx="98" cy="262" rx="10" ry="5" fill="#2f3726"/>
<ellipse cx="113" cy="308" rx="11" ry="10" fill="#2c3323"/>
<ellipse cx="92" cy="328" rx="10" ry="6" fill="#2e3525"/>
<ellipse cx="45" cy="312" rx="10" ry="9" fill="#333b28"/>
<ellipse cx="140" cy="295" rx="9" ry="10" fill="#596443"/>
<ellipse cx="33" cy="300" rx="4" ry="20" fill="#8d9684"/>
<ellipse cx="30" cy="275" rx="4" ry="8" fill="#b8bdb4"/>
<ellipse cx="150" cy="268" rx="12" ry="12" fill="#707c55"/>
<ellipse cx="175" cy="262" rx="12" ry="14" fill="#8a966a"/>
<ellipse cx="72" cy="262" rx="8" ry="5" fill="#5a6544"/>
<ellipse cx="130" cy="258" rx="14" ry="6" fill="#39422c"/>
<ellipse cx="100" cy="296" rx="7" ry="6" fill="#5e6946"/>
<ellipse cx="135" cy="330" rx="6" ry="5" fill="#6a7550"/>
</g>
<g filter="url(#blur6)">
<rect x="355" y="262" width="200" height="160" fill="#b9c0cc"/>
<rect x="356" y="170" width="240" height="92" fill="#5796c6"/>
<rect x="362" y="258" width="240" height="15" fill="#b7d2dc"/>
<polygon points="469,225 483,225 451,385 437,385" fill="#d6dae2"/>
<polygon points="483,225 492,225 459,385 451,385" fill="#a3abb8"/>
</g>
<g filter="url(#blur3)">
<path d="M345 322 Q380 313 410 318 Q440 313 470 318 Q484 314 489 305 L525 298 V400 H345Z" fill="#233f39"/>
<ellipse cx="493" cy="336" rx="10" ry="30" fill="#15231d"/>
<ellipse cx="430" cy="340" rx="12" ry="10" fill="#183029"/>
<rect x="396" y="353" width="52" height="16" fill="#8b939d"/>
<rect x="456" y="355" width="50" height="14" fill="#56664a"/>
<polygon points="453,316 463,316 447,370 436,370" fill="#8f98a3"/>
<ellipse cx="418.5" cy="322.5" rx="10" ry="5" fill="#c9e6e8"/>
<ellipse cx="442.5" cy="322" rx="5" ry="5" fill="#c0dde2"/>
<ellipse cx="475.8" cy="322.5" rx="12" ry="6.5" fill="#d3ebea"/>
<ellipse cx="409" cy="346.5" rx="6" ry="4" fill="#bcd9dc"/>
<ellipse cx="465" cy="349" rx="9" ry="5" fill="#d2e8e6"/>
<rect x="-10" y="335" width="152" height="60" fill="#5e6064"/>
<path d="M-10 340 Q40 331 56 340 L56 364 L-10 364Z" fill="#dedee1"/>
<path d="M57 352 Q60 336 84 333.5 Q104 333.5 111 347 Q117 352 116 364 L57 364Z" fill="#f1f1f3"/>
<path d="M69 342.5 Q86 339 99 343.5 L98 347 L69 347Z" fill="#6f7a86"/>
<rect x="41" y="343" width="9" height="10" fill="#84402c"/>
<rect x="27" y="344" width="12" height="5" fill="#a8a4a8"/>
<path d="M117 343 Q130 338 142 342 L142 356 L117 356Z" fill="#8e97a2"/>
<ellipse cx="131" cy="346" rx="7" ry="4" fill="#93a4b4"/>
</g>
<rect x="27" y="366" width="470" height="208" fill="url(#floorg)" />
<rect x="27" y="366" width="470" height="208" fill="url(#floorh)" />
<rect x="0" y="364.6" width="520" height="2.6" fill="#b4b7c5" filter="url(#blur1)"/>
</g>
<g clip-path="url(#vpclip)">
<g filter="url(#bricknoise)">
<polygon points="127.5,277.0 396.5,277.0 367.0,507.6 157.8,507.6" fill="#c6bbb4"/>
<polygon points="127.9,277.9 171.6,277.9 173.6,300.0 130.8,300.0" fill="#a89890"/>
<line x1="130.8" y1="299.6" x2="173.6" y2="299.6" stroke="#655850" stroke-width="1.2" opacity=".7"/>
<polygon points="173.2,277.9 216.4,277.9 217.4,300.0 175.2,300.0" fill="#a8988f"/>
<line x1="175.2" y1="299.6" x2="217.4" y2="299.6" stroke="#655850" stroke-width="1.2" opacity=".7"/>
<polygon points="218.0,277.9 261.2,277.9 261.2,300.0 219.0,300.0" fill="#aa9a92"/>
<line x1="219.0" y1="299.6" x2="261.2" y2="299.6" stroke="#655850" stroke-width="1.2" opacity=".7"/>
<polygon points="262.8,277.9 306.0,277.9 305.1,300.0 262.8,300.0" fill="#a09085"/>
<line x1="262.8" y1="299.6" x2="305.1" y2="299.6" stroke="#655850" stroke-width="1.2" opacity=".7"/>
<polygon points="307.6,277.9 350.8,277.9 348.9,300.0 306.7,300.0" fill="#aa9a91"/>
<line x1="306.7" y1="299.6" x2="348.9" y2="299.6" stroke="#655850" stroke-width="1.2" opacity=".7"/>
<polygon points="352.4,277.9 396.1,277.9 393.3,300.0 350.5,300.0" fill="#ad9d92"/>
<line x1="350.5" y1="299.6" x2="393.3" y2="299.6" stroke="#655850" stroke-width="1.2" opacity=".7"/>
<polygon points="131.0,301.5 151.8,301.5 154.1,322.7 133.8,322.7" fill="#9d8d84"/>
<line x1="133.8" y1="322.3" x2="154.1" y2="322.3" stroke="#655850" stroke-width="1.2" opacity=".7"/>
<polygon points="153.4,301.5 195.6,301.5 197.0,322.7 155.7,322.7" fill="#a39388"/>
<line x1="155.7" y1="322.3" x2="197.0" y2="322.3" stroke="#655850" stroke-width="1.2" opacity=".7"/>
<polygon points="197.2,301.5 239.4,301.5 239.9,322.7 198.6,322.7" fill="#9c8c84"/>
<line x1="198.6" y1="322.3" x2="239.9" y2="322.3" stroke="#655850" stroke-width="1.2" opacity=".7"/>
<polygon points="241.0,301.5 283.1,301.5 282.7,322.7 241.5,322.7" fill="#9b8b83"/>
<line x1="241.5" y1="322.3" x2="282.7" y2="322.3" stroke="#655850" stroke-width="1.2" opacity=".7"/>
<polygon points="284.7,301.5 326.9,301.5 325.6,322.7 284.3,322.7" fill="#a6968d"/>
<line x1="284.3" y1="322.3" x2="325.6" y2="322.3" stroke="#655850" stroke-width="1.2" opacity=".7"/>
<polygon points="328.5,301.5 370.7,301.5 368.4,322.7 327.2,322.7" fill="#ad9d92"/>
<line x1="327.2" y1="322.3" x2="368.4" y2="322.3" stroke="#655850" stroke-width="1.2" opacity=".7"/>
<polygon points="372.3,301.5 393.1,301.5 390.3,322.7 370.0,322.7" fill="#ad9d91"/>
<line x1="370.0" y1="322.3" x2="390.3" y2="322.3" stroke="#655850" stroke-width="1.2" opacity=".7"/>
<polygon points="134.0,324.2 175.7,324.2 177.5,344.6 136.7,344.6" fill="#aa9a8e"/>
<line x1="136.7" y1="344.2" x2="177.5" y2="344.2" stroke="#655850" stroke-width="1.2" opacity=".7"/>
<polygon points="177.3,324.2 218.5,324.2 219.4,344.6 179.1,344.6" fill="#9b8b7f"/>
<line x1="179.1" y1="344.2" x2="219.4" y2="344.2" stroke="#655850" stroke-width="1.2" opacity=".7"/>
<polygon points="220.1,324.2 261.3,324.2 261.3,344.6 221.0,344.6" fill="#a09085"/>
<line x1="221.0" y1="344.2" x2="261.3" y2="344.2" stroke="#655850" stroke-width="1.2" opacity=".7"/>
<polygon points="262.9,324.2 304.1,324.2 303.2,344.6 262.9,344.6" fill="#ad9d91"/>
<line x1="262.9" y1="344.2" x2="303.2" y2="344.2" stroke="#655850" stroke-width="1.2" opacity=".7"/>
<polygon points="305.7,324.2 346.9,324.2 345.1,344.6 304.8,344.6" fill="#a8988e"/>
<line x1="304.8" y1="344.2" x2="345.1" y2="344.2" stroke="#655850" stroke-width="1.2" opacity=".7"/>
<polygon points="348.5,324.2 390.2,324.2 387.6,344.6 346.7,344.6" fill="#a89890"/>
<line x1="346.7" y1="344.2" x2="387.6" y2="344.2" stroke="#655850" stroke-width="1.2" opacity=".7"/>
<polygon points="136.9,346.0 156.7,346.0 158.8,365.6 139.4,365.6" fill="#a09088"/>
<line x1="139.4" y1="365.2" x2="158.8" y2="365.2" stroke="#655850" stroke-width="1.2" opacity=".7"/>
<polygon points="158.3,346.0 198.5,346.0 199.8,365.6 160.4,365.6" fill="#a19187"/>
<line x1="160.4" y1="365.2" x2="199.8" y2="365.2" stroke="#655850" stroke-width="1.2" opacity=".7"/>
<polygon points="200.1,346.0 240.4,346.0 240.9,365.6 201.4,365.6" fill="#a9998d"/>
<line x1="201.4" y1="365.2" x2="240.9" y2="365.2" stroke="#655850" stroke-width="1.2" opacity=".7"/>
<polygon points="242.0,346.0 282.2,346.0 281.9,365.6 242.5,365.6" fill="#9c8c83"/>
<line x1="242.5" y1="365.2" x2="281.9" y2="365.2" stroke="#655850" stroke-width="1.2" opacity=".7"/>
<polygon points="283.8,346.0 324.1,346.0 322.9,365.6 283.5,365.6" fill="#a29289"/>
<line x1="283.5" y1="365.2" x2="322.9" y2="365.2" stroke="#655850" stroke-width="1.2" opacity=".7"/>
<polygon points="325.7,346.0 365.9,346.0 363.9,365.6 324.5,365.6" fill="#ab9b8f"/>
<line x1="324.5" y1="365.2" x2="363.9" y2="365.2" stroke="#655850" stroke-width="1.2" opacity=".7"/>
<polygon points="367.5,346.0 387.4,346.0 384.9,365.6 365.5,365.6" fill="#a29288"/>
<line x1="365.5" y1="365.2" x2="384.9" y2="365.2" stroke="#655850" stroke-width="1.2" opacity=".7"/>
<polygon points="139.6,367.0 179.5,367.0 181.1,385.8 142.1,385.8" fill="#a19189"/>
<line x1="142.1" y1="385.4" x2="181.1" y2="385.4" stroke="#655850" stroke-width="1.2" opacity=".7"/>
<polygon points="181.1,367.0 220.4,367.0 221.3,385.8 182.7,385.8" fill="#a39387"/>
<line x1="182.7" y1="385.4" x2="221.3" y2="385.4" stroke="#655850" stroke-width="1.2" opacity=".7"/>
<polygon points="222.0,367.0 261.4,367.0 261.4,385.8 222.9,385.8" fill="#9c8c84"/>
<line x1="222.9" y1="385.4" x2="261.4" y2="385.4" stroke="#655850" stroke-width="1.2" opacity=".7"/>
<polygon points="263.0,367.0 302.3,367.0 301.5,385.8 263.0,385.8" fill="#9d8d84"/>
<line x1="263.0" y1="385.4" x2="301.5" y2="385.4" stroke="#655850" stroke-width="1.2" opacity=".7"/>
<polygon points="303.9,367.0 343.2,367.0 341.7,385.8 303.1,385.8" fill="#9d8d83"/>
<line x1="303.1" y1="385.4" x2="341.7" y2="385.4" stroke="#655850" stroke-width="1.2" opacity=".7"/>
<polygon points="344.8,367.0 384.7,367.0 382.3,385.8 343.3,385.8" fill="#a6968a"/>
<line x1="343.3" y1="385.4" x2="382.3" y2="385.4" stroke="#655850" stroke-width="1.2" opacity=".7"/>
<polygon points="142.3,387.2 161.2,387.2 163.2,405.2 144.6,405.2" fill="#9a8a7e"/>
<line x1="144.6" y1="404.8" x2="163.2" y2="404.8" stroke="#655850" stroke-width="1.2" opacity=".7"/>
<polygon points="162.8,387.2 201.3,387.2 202.5,405.2 164.8,405.2" fill="#a09085"/>
<line x1="164.8" y1="404.8" x2="202.5" y2="404.8" stroke="#655850" stroke-width="1.2" opacity=".7"/>
<polygon points="202.9,387.2 241.4,387.2 241.8,405.2 204.1,405.2" fill="#9b8b82"/>
<line x1="204.1" y1="404.8" x2="241.8" y2="404.8" stroke="#655850" stroke-width="1.2" opacity=".7"/>
<polygon points="243.0,387.2 281.4,387.2 281.1,405.2 243.4,405.2" fill="#a6968d"/>
<line x1="243.4" y1="404.8" x2="281.1" y2="404.8" stroke="#655850" stroke-width="1.2" opacity=".7"/>
<polygon points="283.0,387.2 321.5,387.2 320.4,405.2 282.7,405.2" fill="#a7978b"/>
<line x1="282.7" y1="404.8" x2="320.4" y2="404.8" stroke="#655850" stroke-width="1.2" opacity=".7"/>
<polygon points="323.1,387.2 361.6,387.2 359.7,405.2 322.0,405.2" fill="#ac9c91"/>
<line x1="322.0" y1="404.8" x2="359.7" y2="404.8" stroke="#655850" stroke-width="1.2" opacity=".7"/>
<polygon points="363.2,387.2 382.1,387.2 379.8,405.2 361.3,405.2" fill="#a29288"/>
<line x1="361.3" y1="404.8" x2="379.8" y2="404.8" stroke="#655850" stroke-width="1.2" opacity=".7"/>
<polygon points="144.8,406.6 183.0,406.6 184.5,423.9 147.1,423.9" fill="#9c8c82"/>
<line x1="147.1" y1="423.5" x2="184.5" y2="423.5" stroke="#655850" stroke-width="1.2" opacity=".7"/>
<polygon points="184.6,406.6 222.2,406.6 223.0,423.9 186.1,423.9" fill="#a49488"/>
<line x1="186.1" y1="423.5" x2="223.0" y2="423.5" stroke="#655850" stroke-width="1.2" opacity=".7"/>
<polygon points="223.8,406.6 261.4,406.6 261.5,423.9 224.6,423.9" fill="#a7978b"/>
<line x1="224.6" y1="423.5" x2="261.5" y2="423.5" stroke="#655850" stroke-width="1.2" opacity=".7"/>
<polygon points="263.0,406.6 300.7,406.6 299.9,423.9 263.1,423.9" fill="#9e8e83"/>
<line x1="263.1" y1="423.5" x2="299.9" y2="423.5" stroke="#655850" stroke-width="1.2" opacity=".7"/>
<polygon points="302.3,406.6 339.9,406.6 338.4,423.9 301.5,423.9" fill="#9d8d81"/>
<line x1="301.5" y1="423.5" x2="338.4" y2="423.5" stroke="#655850" stroke-width="1.2" opacity=".7"/>
<polygon points="341.5,406.6 379.6,406.6 377.4,423.9 340.0,423.9" fill="#9b8b82"/>
<line x1="340.0" y1="423.5" x2="377.4" y2="423.5" stroke="#655850" stroke-width="1.2" opacity=".7"/>
<polygon points="147.3,425.3 165.4,425.3 167.2,441.8 149.5,441.8" fill="#a9998e"/>
<line x1="149.5" y1="441.4" x2="167.2" y2="441.4" stroke="#655850" stroke-width="1.2" opacity=".7"/>
<polygon points="167.0,425.3 203.8,425.3 204.9,441.8 168.8,441.8" fill="#ab9b90"/>
<line x1="168.8" y1="441.4" x2="204.9" y2="441.4" stroke="#655850" stroke-width="1.2" opacity=".7"/>
<polygon points="205.4,425.3 242.2,425.3 242.6,441.8 206.5,441.8" fill="#a89890"/>
<line x1="206.5" y1="441.4" x2="242.6" y2="441.4" stroke="#655850" stroke-width="1.2" opacity=".7"/>
<polygon points="243.8,425.3 280.7,425.3 280.3,441.8 244.2,441.8" fill="#a09085"/>
<line x1="244.2" y1="441.4" x2="280.3" y2="441.4" stroke="#655850" stroke-width="1.2" opacity=".7"/>
<polygon points="282.3,425.3 319.1,425.3 318.1,441.8 281.9,441.8" fill="#a7978e"/>
<line x1="281.9" y1="441.4" x2="318.1" y2="441.4" stroke="#655850" stroke-width="1.2" opacity=".7"/>
<polygon points="320.7,425.3 357.5,425.3 355.8,441.8 319.7,441.8" fill="#9d8d84"/>
<line x1="319.7" y1="441.4" x2="355.8" y2="441.4" stroke="#655850" stroke-width="1.2" opacity=".7"/>
<polygon points="359.1,425.3 377.2,425.3 375.1,441.8 357.4,441.8" fill="#a7978c"/>
<line x1="357.4" y1="441.4" x2="375.1" y2="441.4" stroke="#655850" stroke-width="1.2" opacity=".7"/>
<polygon points="149.6,443.3 186.2,443.3 187.6,459.1 151.7,459.1" fill="#9a8a80"/>
<line x1="151.7" y1="458.7" x2="187.6" y2="458.7" stroke="#655850" stroke-width="1.2" opacity=".7"/>
<polygon points="187.8,443.3 223.8,443.3 224.6,459.1 189.2,459.1" fill="#ac9c92"/>
<line x1="189.2" y1="458.7" x2="224.6" y2="458.7" stroke="#655850" stroke-width="1.2" opacity=".7"/>
<polygon points="225.4,443.3 261.5,443.3 261.5,459.1 226.2,459.1" fill="#9a8a7f"/>
<line x1="226.2" y1="458.7" x2="261.5" y2="458.7" stroke="#655850" stroke-width="1.2" opacity=".7"/>
<polygon points="263.1,443.3 299.1,443.3 298.5,459.1 263.1,459.1" fill="#9f8f86"/>
<line x1="263.1" y1="458.7" x2="298.5" y2="458.7" stroke="#655850" stroke-width="1.2" opacity=".7"/>
<polygon points="300.7,443.3 336.8,443.3 335.4,459.1 300.1,459.1" fill="#ad9d95"/>
<line x1="300.1" y1="458.7" x2="335.4" y2="458.7" stroke="#655850" stroke-width="1.2" opacity=".7"/>
<polygon points="338.4,443.3 374.9,443.3 372.9,459.1 337.0,459.1" fill="#9d8d81"/>
<line x1="337.0" y1="458.7" x2="372.9" y2="458.7" stroke="#655850" stroke-width="1.2" opacity=".7"/>
<polygon points="151.9,460.5 169.3,460.5 170.9,475.7 153.9,475.7" fill="#9e8e83"/>
<line x1="153.9" y1="475.3" x2="170.9" y2="475.3" stroke="#655850" stroke-width="1.2" opacity=".7"/>
<polygon points="170.9,460.5 206.2,460.5 207.2,475.7 172.5,475.7" fill="#a8988e"/>
<line x1="172.5" y1="475.3" x2="207.2" y2="475.3" stroke="#655850" stroke-width="1.2" opacity=".7"/>
<polygon points="207.8,460.5 243.1,460.5 243.4,475.7 208.8,475.7" fill="#9a8a82"/>
<line x1="208.8" y1="475.3" x2="243.4" y2="475.3" stroke="#655850" stroke-width="1.2" opacity=".7"/>
<polygon points="244.7,460.5 280.0,460.5 279.7,475.7 245.0,475.7" fill="#a4948a"/>
<line x1="245.0" y1="475.3" x2="279.7" y2="475.3" stroke="#655850" stroke-width="1.2" opacity=".7"/>
<polygon points="281.6,460.5 316.9,460.5 315.9,475.7 281.3,475.7" fill="#a6968a"/>
<line x1="281.3" y1="475.3" x2="315.9" y2="475.3" stroke="#655850" stroke-width="1.2" opacity=".7"/>
<polygon points="318.5,460.5 353.8,460.5 352.2,475.7 317.5,475.7" fill="#9c8c80"/>
<line x1="317.5" y1="475.3" x2="352.2" y2="475.3" stroke="#655850" stroke-width="1.2" opacity=".7"/>
<polygon points="355.4,460.5 372.7,460.5 370.8,475.7 353.8,475.7" fill="#a09088"/>
<line x1="353.8" y1="475.3" x2="370.8" y2="475.3" stroke="#655850" stroke-width="1.2" opacity=".7"/>
<polygon points="154.1,477.1 189.2,477.1 190.5,491.6 156.0,491.6" fill="#a19185"/>
<line x1="156.0" y1="491.2" x2="190.5" y2="491.2" stroke="#655850" stroke-width="1.2" opacity=".7"/>
<polygon points="190.8,477.1 225.4,477.1 226.0,491.6 192.1,491.6" fill="#ad9d93"/>
<line x1="192.1" y1="491.2" x2="226.0" y2="491.2" stroke="#655850" stroke-width="1.2" opacity=".7"/>
<polygon points="227.0,477.1 261.5,477.1 261.6,491.6 227.6,491.6" fill="#a5958d"/>
<line x1="227.6" y1="491.2" x2="261.6" y2="491.2" stroke="#655850" stroke-width="1.2" opacity=".7"/>
<polygon points="263.1,477.1 297.7,477.1 297.1,491.6 263.2,491.6" fill="#a8988d"/>
<line x1="263.2" y1="491.2" x2="297.1" y2="491.2" stroke="#655850" stroke-width="1.2" opacity=".7"/>
<polygon points="299.3,477.1 333.9,477.1 332.7,491.6 298.7,491.6" fill="#ac9c93"/>
<line x1="298.7" y1="491.2" x2="332.7" y2="491.2" stroke="#655850" stroke-width="1.2" opacity=".7"/>
<polygon points="335.5,477.1 370.6,477.1 368.7,491.6 334.3,491.6" fill="#ac9c91"/>
<line x1="334.3" y1="491.2" x2="368.7" y2="491.2" stroke="#655850" stroke-width="1.2" opacity=".7"/>
<polygon points="156.2,493.1 172.8,493.1 174.4,507.0 158.0,507.0" fill="#a6968b"/>
<line x1="158.0" y1="506.6" x2="174.4" y2="506.6" stroke="#655850" stroke-width="1.2" opacity=".7"/>
<polygon points="174.4,493.1 208.3,493.1 209.3,507.0 176.0,507.0" fill="#9e8e84"/>
<line x1="176.0" y1="506.6" x2="209.3" y2="506.6" stroke="#655850" stroke-width="1.2" opacity=".7"/>
<polygon points="209.9,493.1 243.8,493.1 244.2,507.0 210.9,507.0" fill="#a19189"/>
<line x1="210.9" y1="506.6" x2="244.2" y2="506.6" stroke="#655850" stroke-width="1.2" opacity=".7"/>
<polygon points="245.4,493.1 279.3,493.1 279.0,507.0 245.8,507.0" fill="#a19186"/>
<line x1="245.8" y1="506.6" x2="279.0" y2="506.6" stroke="#655850" stroke-width="1.2" opacity=".7"/>
<polygon points="280.9,493.1 314.8,493.1 313.9,507.0 280.6,507.0" fill="#9f8f87"/>
<line x1="280.6" y1="506.6" x2="313.9" y2="506.6" stroke="#655850" stroke-width="1.2" opacity=".7"/>
<polygon points="316.4,493.1 350.3,493.1 348.8,507.0 315.5,507.0" fill="#a09087"/>
<line x1="315.5" y1="506.6" x2="348.8" y2="506.6" stroke="#655850" stroke-width="1.2" opacity=".7"/>
<polygon points="351.9,493.1 368.6,493.1 366.8,507.0 350.4,507.0" fill="#a99991"/>
<line x1="350.4" y1="506.6" x2="366.8" y2="506.6" stroke="#655850" stroke-width="1.2" opacity=".7"/>
</g>
</g>
<polygon points="27,240 33.5,240 32,246 27,248.5" fill="#0a6cf0"/>
<circle cx="46.5" cy="257" r="12.3" fill="#4a4c4b" fill-opacity=".9" stroke="#2c2e2d" stroke-width="1.2"/>
<rect x="41" y="251.79999999999998" width="11.5" height="1.6" fill="#c4c4c4"/>
<rect x="41" y="256.2" width="11.5" height="1.6" fill="#c4c4c4"/>
<rect x="41" y="260.59999999999997" width="11.5" height="1.6" fill="#c4c4c4"/>
<rect x="69" y="244" width="92" height="26.5" rx="13.2" fill="#4a4c4b" fill-opacity=".9" stroke="#2c2e2d" stroke-width="1.2"/>
<text x="77.5" y="261.5" font-size="13.2" fill="#cecece" textLength="75.5" lengthAdjust="spacing" stroke="#cecece" stroke-width="0.3">Perspective</text>
<rect x="170" y="244" width="54" height="26.5" rx="13.2" fill="#4a4c4b" fill-opacity=".9" stroke="#2c2e2d" stroke-width="1.2"/>
<circle cx="187.3" cy="257.3" r="6.6" fill="#8a8c8b" stroke="#b4b4b4" stroke-width="1.4"/>
<circle cx="189.8" cy="254.2" r="1.8" fill="#e0e0e0"/>
<text x="201" y="261.5" font-size="13.2" fill="#cecece" textLength="15.5" lengthAdjust="spacing" stroke="#cecece" stroke-width="0.3">Lit</text>
<rect x="233" y="244" width="51.5" height="26.5" rx="13.2" fill="#4a4c4b" fill-opacity=".9" stroke="#2c2e2d" stroke-width="1.2"/>
<text x="241.5" y="261.5" font-size="13.2" fill="#cecece" textLength="34" lengthAdjust="spacing" stroke="#cecece" stroke-width="0.3">Show</text>
<clipPath id="tgclip"><rect x="294" y="244" width="109.5" height="26.5" rx="13.2"/></clipPath>
<rect x="294" y="244" width="109.5" height="26.5" rx="13.2" fill="#4a4c4b" fill-opacity=".9" stroke="#2c2e2d" stroke-width="1.2"/>
<g clip-path="url(#tgclip)">
<rect x="349" y="244" width="28.3" height="26.5" fill="#464847" />
<rect x="377.3" y="244" width="26.7" height="26.5" fill="#1279e0" />
<rect x="320.6" y="244" width="1" height="26.5" fill="#3a3c3b" />
<rect x="348.6" y="244" width="1" height="26.5" fill="#2e302f" />
</g>
<path d="M306 249.5 L306 264 L309.6 260.8 L312.2 266.2 L314.4 265.2 L311.9 259.9 L316.6 259.6Z" fill="#c4c4c4"/>
<g stroke="#c4c4c4" stroke-width="1.3" fill="none"><path d="M331 257.5H341M336 252.5V262.5"/></g>
<path d="M329 257.5l2.8 -2.3v4.6zM343 257.5l-2.8 -2.3v4.6zM336 250.5l-2.3 2.8h4.6zM336 264.5l-2.3 -2.8h4.6z" fill="#c4c4c4"/>
<g stroke="#c4c4c4" stroke-width="1.7" fill="none"><path d="M357.3 256.5 A6.3 6.3 0 0 1 368.5 253.7"/><path d="M369.7 258.5 A6.3 6.3 0 0 1 358.5 261.3"/></g>
<path d="M371.1 250.5v5.6h-5.6z" fill="#c4c4c4"/><path d="M355.9 264.5v-5.6h5.6z" fill="#c4c4c4"/>
<g stroke="#fff" stroke-width="1.6" fill="none"><path d="M383.1 255.0V251.3H386.8"/><path d="M395.5 260.0V263.7H391.8"/><path d="M387.3 259.5L394.3 252.5"/></g>
<path d="M396.1 250.7v5.4l-5.4 -5.4z" fill="#fff"/><rect x="382.5" y="260.9" width="3.4" height="3.4" fill="#fff"/>
<circle cx="423.5" cy="257.5" r="12.3" fill="#4a4c4b" fill-opacity=".9" stroke="#2c2e2d" stroke-width="1.2"/>
<g stroke="#c4c4c4" stroke-width="1.3" fill="none"><path d="M423.5 248.5V253.5M418.9 254.3L423.5 252.1L428.1 254.3V260.1L423.5 262.3L418.9 260.1Z M418.9 254.3L423.5 256.5L428.1 254.3M423.5 256.5V262.3M418.9 260.1L414.9 264.1M428.1 260.1L432.1 264.1"/></g>
<circle cx="455.3" cy="257.5" r="12.3" fill="#4a4c4b" fill-opacity=".9" stroke="#2c2e2d" stroke-width="1.2"/>
<g stroke="#c4c4c4" stroke-width="1.4" fill="none"><path d="M449.8 251.5V256.5L461.8 263.0M449.8 256.5L457.3 254.0L460.8 259.0L454.3 259.5"/></g>
<path d="M449.8 248.9l2.6 3.4h-5.2zM463.7 264.1l-4.4 -.6l2.4 -3.4z" fill="#c4c4c4"/>
<path d="M482 244.5 Q492 251 490.5 257.5 Q492 264 482 270.5 Q472.5 264 474 257.5 Q472.5 251 482 244.5Z" fill="#4a4c4b" fill-opacity=".9" stroke="#2c2e2d" stroke-width="1.2"/>
<g stroke="#c4c4c4" stroke-width="1.3" fill="none"><path d="M478 253.5l4 4l-4 4M482.5 253.5l4 4l-4 4"/></g>
<line x1="59.8" y1="514" x2="59.8" y2="541" stroke="#2a3cc4" stroke-width="1.6"/>
<line x1="34" y1="539.8" x2="59" y2="539.8" stroke="#34e234" stroke-width="2.3"/>
<text x="37" y="545.8" font-size="13" fill="#34e234" font-weight="700" textLength="8.2" lengthAdjust="spacing">Y</text>
<line x1="60.2" y1="541" x2="60.2" y2="547" stroke="#e0402c" stroke-width="2"/>
<text x="63.4" y="519.1" font-size="13.6" fill="#2a3cc8" font-weight="700" textLength="7.2" lengthAdjust="spacing">Z</text>
<text x="63.4" y="552.2" font-size="13.2" fill="#e23a22" font-weight="700" textLength="9" lengthAdjust="spacing">X</text>
<defs><radialGradient id="sph" cx=".42" cy=".32" r=".7"><stop offset="0" stop-color="#c9c9c9"/><stop offset=".5" stop-color="#8f8f8f"/><stop offset="1" stop-color="#6a6a6a"/></radialGradient><linearGradient id="cyl" x1="0" y1="0" x2="1" y2="0"><stop offset="0" stop-color="#e4e4e4"/><stop offset=".3" stop-color="#9a9a9a"/><stop offset=".55" stop-color="#b8b8b8"/><stop offset="1" stop-color="#7c7c7c"/></linearGradient></defs>
<rect x="395.5" y="554.2" width="18.4" height="17.6" rx="8.2" fill="#dcdcdc" stroke="#5a5a5a" stroke-width="1.1"/>
<rect x="416.1" y="554.2" width="18.4" height="17.6" rx="8.2" fill="#dcdcdc" stroke="#5a5a5a" stroke-width="1.1"/>
<rect x="435.90000000000003" y="554.2" width="18.4" height="17.6" rx="8.2" fill="#e5921e" stroke="#3a2a14" stroke-width="1.1"/>
<rect x="456.0" y="554.2" width="18.4" height="17.6" rx="8.2" fill="#dcdcdc" stroke="#5a5a5a" stroke-width="1.1"/>
<rect x="476.0" y="554.2" width="18.4" height="17.6" rx="8.2" fill="#f0f0f0" stroke="#5a5a5a" stroke-width="1.1"/>
<rect x="399.3" y="555.4" width="11.6" height="15.2" rx="3" fill="url(#cyl)"/>
<circle cx="425.3" cy="563" r="7.8" fill="url(#sph)"/>
<path d="M439.5 562.2h11.6v1.8h-3.8v2.4h-4v-2.4h-3.8z" fill="#8aa0b8"/>
<rect x="458.59999999999997" y="555.6" width="13.2" height="14.8" rx="3" fill="#8e8e8e"/><rect x="466.4" y="555.6" width="5.4" height="14.8" rx="2.4" fill="#787878"/>
<path d="M479.2 564l6.4 -6l6 2.2v3.6l-6.4 6l-6 -2.2z" fill="#8c8c8c"/><path d="M479.2 564l6.4 -6l6 2.2l-6.4 6z" fill="#c8c8c8"/><path d="M484.59999999999997 560.6l2 -1.8l1.6 .6l-2 1.8zM487.8 561.8l2 -1.8l1.6 .6l-2 1.8z" fill="#3a3a3a"/><path d="M480.2 566l1.6 .6v1.6l-1.6 -.6zM482.8 567l1.6 .6v1.6l-1.6 -.6z" fill="#505050"/>
<rect x="23" y="574.3" width="477" height="32.7" fill="#151515" />
<path d="M27.4 607V584a4 4 0 0 1 4 -4H176.7a4 4 0 0 1 4 4V607Z" fill="#242424"/>
<rect x="27" y="607" width="470" height="43" fill="#242424" />
<g transform="translate(32.7,584.2)"><g stroke="#6a6a6a" stroke-width="1.3"><path d="M1 1.2H9M9.5 9.5H16.5M7 12.4H16.5M4.5 15.3H16.5"/></g><path d="M12.6 0.4l3.4 3.4l-9.6 9.6l-3.4 -3.4z" fill="#d4d4d4"/><path d="M2.3 10.9l2.9 2.9l-4.8 1.9z" fill="#d4d4d4"/></g>
<text x="57.7" y="597" font-size="13.7" fill="#b8b8b8" textLength="43" lengthAdjust="spacing" stroke="#b8b8b8" stroke-width="0.3">Details</text>
<path d="M158 589.2l6.6 6.6M164.6 589.2l-6.6 6.6" stroke="#c0c0c0" stroke-width="1.7" fill="none"/>
<g transform="translate(188.5,584.2)"><g stroke="#6a6a6a" stroke-width="1.3"><path d="M1 1.2H9M9.5 9.5H16.5M7 12.4H16.5M4.5 15.3H16.5"/></g><path d="M12.6 0.4l3.4 3.4l-9.6 9.6l-3.4 -3.4z" fill="#d4d4d4"/><path d="M2.3 10.9l2.9 2.9l-4.8 1.9z" fill="#d4d4d4"/></g>
<text x="213.2" y="597" font-size="13.7" fill="#b8b8b8" textLength="74" lengthAdjust="spacing" stroke="#b8b8b8" stroke-width="0.3">Parameters</text>
<g transform="translate(344,584.2)"><g stroke="#6a6a6a" stroke-width="1.3"><path d="M1 1.2H9M9.5 9.5H16.5M7 12.4H16.5M4.5 15.3H16.5"/></g><path d="M12.6 0.4l3.4 3.4l-9.6 9.6l-3.4 -3.4z" fill="#d4d4d4"/><path d="M2.3 10.9l2.9 2.9l-4.8 1.9z" fill="#d4d4d4"/></g>
<text x="368.5" y="597" font-size="13.7" fill="#b8b8b8" textLength="88.5" lengthAdjust="spacing" stroke="#b8b8b8" stroke-width="0.3">Preview Sce...</text>
<rect x="37.5" y="616.8" width="396.5" height="22.4" rx="11.2" fill="#0d0d0d" stroke="#353535" stroke-width="1"/>
<circle cx="48.8" cy="626.6" r="5.3" fill="none" stroke="#d0d0d0" stroke-width="1.7"/><path d="M52.7 630.8L57.6 635.6" stroke="#d0d0d0" stroke-width="2"/>
<text x="68.3" y="631" font-size="13.5" fill="#5a5a5a" textLength="44.5" lengthAdjust="spacing">Search</text>
<rect x="449.8" y="619.9" width="15.4" height="16.6" rx="1" fill="#d6d6d6" />
<rect x="451.8" y="623" width="11.4" height="1.5" rx="0.6" fill="#1e1e1e" />
<rect x="451.8" y="627" width="4.6" height="2.6" rx="0.5" fill="#2e2e2e" />
<rect x="451.8" y="631.6" width="4.6" height="2.6" rx="0.5" fill="#2e2e2e" />
<rect x="458.6" y="627" width="4.6" height="2.6" rx="0.5" fill="#2e2e2e" />
<rect x="458.6" y="631.6" width="4.6" height="2.6" rx="0.5" fill="#2e2e2e" />
<polygon points="483.7,619.3 486.0,622.7 490.0,621.9 489.2,625.9 492.6,628.2 489.2,630.5 490.0,634.5 486.0,633.7 483.7,637.1 481.4,633.7 477.4,634.5 478.2,630.5 474.8,628.2 478.2,625.9 477.4,621.9 481.4,622.7" fill="#dadada"/>
<circle cx="483.7" cy="628.2" r="5.6" fill="#dadada"/><circle cx="483.7" cy="628.2" r="4" fill="#3c3d3c"/><circle cx="483.7" cy="628.2" r="1.6" fill="#2a2a2a"/>
<rect x="27" y="649.5" width="470" height="27.5" fill="#2f2f2f" />
<path d="M32.6 659.4h11l-5.5 6.6z" fill="#9a9a9a"/>
<text x="51.4" y="667" font-size="11.6" fill="#d0d0d0" font-weight="700" textLength="111" lengthAdjust="spacing">Material Expression</text>
<rect x="27" y="677" width="470" height="2" fill="#1a1a1a" />
<rect x="27" y="679" width="470" height="28" fill="#232323" />
<rect x="208.4" y="679" width="1" height="28" fill="#1c1c1c" />
<rect x="454.5" y="679" width="1" height="28" fill="#1c1c1c" />
<text x="51.4" y="697" font-size="11.4" fill="#b8b8b8" textLength="27" lengthAdjust="spacing" stroke="#b8b8b8" stroke-width="0.25">Desc</text>
<rect x="222" y="683.3" width="229" height="19.9" rx="3" fill="#0f0f0f" stroke="#2e2e2e" stroke-width="1"/>
<rect x="27" y="707" width="470" height="307" fill="#1a1a1a" />
</svg>
</div></body></html>
